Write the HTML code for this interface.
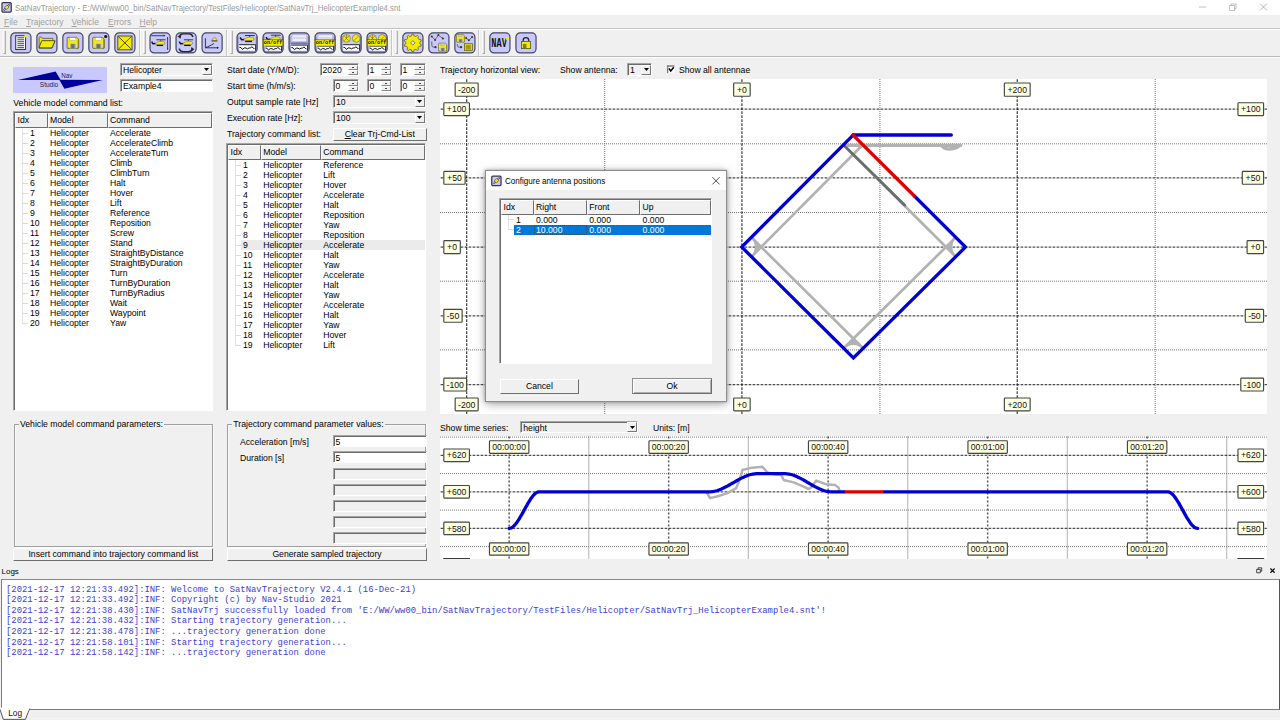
<!DOCTYPE html><html><head><meta charset="utf-8"><title>SatNavTrajectory</title><style>
html,body{margin:0;padding:0;}
body{width:1280px;height:720px;overflow:hidden;background:#f0f0f0;position:relative;
 font-family:"Liberation Sans",sans-serif;font-size:8.667px;line-height:10px;color:#000;}
.a{position:absolute;white-space:nowrap;}
.t{position:absolute;white-space:nowrap;line-height:10px;height:10px;}
.sunk{position:absolute;box-sizing:border-box;border-top:1px solid #a6a6a6;border-left:1px solid #a6a6a6;border-right:1px solid #fff;border-bottom:1px solid #fff;box-shadow:inset 1px 1px 0 #6c6c6c;}
.w{background:#fff;}
.btn{position:absolute;box-sizing:border-box;background:#f0f0f0;border-top:1px solid #fff;border-left:1px solid #fff;border-right:1.4px solid #6e6e6e;border-bottom:1.4px solid #6e6e6e;text-align:center;line-height:10px;}
.hdr{position:absolute;box-sizing:border-box;background:#f0f0f0;border-top:1px solid #fff;border-left:1px solid #fff;border-right:1.3px solid #6e6e6e;border-bottom:1.3px solid #6e6e6e;}
.grp{position:absolute;box-sizing:border-box;border:1px solid #a0a0a0;box-shadow:0.6px 0.6px 0 #fff, inset 0.6px 0.6px 0 #fff;}
.lab{position:absolute;box-sizing:border-box;background:#ffffe1;border:1px solid #333;text-align:center;font-size:8.667px;line-height:12px;}
.seg{font-family:"Liberation Sans",sans-serif;}
.mono{font-family:"Liberation Mono",monospace;font-size:8.89px;color:#4040d2;}
.tb{position:absolute;width:21.4px;height:21.4px;box-sizing:border-box;border:1.3px solid #34344a;border-radius:5px;background:#c8c8ff;overflow:hidden;}
.tb svg{position:absolute;left:-1.3px;top:-1.3px;}
</style></head><body>
<div class="a" style="left:0px;top:0px;width:1280px;height:15px;background:#fff;"></div>
<svg class="a" style="left:0;top:0" width="14" height="14" viewBox="0 0 14 14"><g transform="translate(1.3 2.05)"><rect x="0.65" y="0.65" width="9.3" height="9.4" rx="1.1" fill="#c8c8ff" stroke="#34344c" stroke-width="1.25"/><line x1="2.4" y1="8.3" x2="8.6" y2="2" stroke="#2a2a34" stroke-width="1.5"/><line x1="2.6" y1="8.1" x2="8.4" y2="2.2" stroke="#fff" stroke-width="0.7"/><ellipse cx="5.4" cy="5.2" rx="2.1" ry="1.7" transform="rotate(-45 5.4 5.2)" fill="#f4ec00" stroke="#2a2a20" stroke-width="0.5"/></g></svg>
<div class="a" style="left:15px;top:1.9px;font-size:9px;line-height:12px;color:#9a9a9a;transform:scaleX(0.871);transform-origin:0 0;">SatNavTrajectory - E:/WW/ww00_bin/SatNavTrajectory/TestFiles/Helicopter/SatNavTrj_HelicopterExample4.snt</div>
<svg class="a" style="left:1180px;top:0" width="100" height="15" viewBox="0 0 100 15"><line x1="19" y1="7" x2="26" y2="7" stroke="#c0c0c0" stroke-width="1"/><path d="M49.5 5.5h5v5h-5z M51 5.5v-1.5h5v5h-1.5" fill="none" stroke="#b0b0b0" stroke-width="0.8"/><path d="M80 3.5l7 7M87 3.5l-7 7" stroke="#999" stroke-width="0.7"/></svg>
<div class="a" style="left:4px;top:15.7px;font-size:8.5px;line-height:12px;color:#a0a0a0"><u>F</u>ile</div>
<div class="a" style="left:26px;top:15.7px;font-size:8.5px;line-height:12px;color:#a0a0a0"><u>T</u>rajectory</div>
<div class="a" style="left:71.5px;top:15.7px;font-size:8.5px;line-height:12px;color:#a0a0a0"><u>V</u>ehicle</div>
<div class="a" style="left:108px;top:15.7px;font-size:8.5px;line-height:12px;color:#a0a0a0"><u>E</u>rrors</div>
<div class="a" style="left:139.5px;top:15.7px;font-size:8.5px;line-height:12px;color:#a0a0a0"><u>H</u>elp</div>
<div class="a" style="left:0px;top:28px;width:1280px;height:1px;background:#c2c2c2;"></div>
<div class="a" style="left:0px;top:29px;width:1280px;height:1px;background:#fff;"></div>
<div class="a" style="left:0px;top:56px;width:1280px;height:1px;background:#bababa;"></div>
<div class="a" style="left:0px;top:57px;width:1280px;height:1px;background:#fff;"></div>
<div class="a" style="left:2.6px;top:31.4px;width:3.4px;height:22.2px;background:#dedede;border-left:1px solid #fbfbfb;border-right:1px solid #b0b0b0;border-bottom:0.9px solid #a8a8a8;box-sizing:border-box;"></div>
<div class="a" style="left:138.6px;top:30px;width:1px;height:26px;background:#c6c6c6;"></div>
<div class="a" style="left:139.6px;top:30px;width:1px;height:26px;background:#fbfbfb;"></div>
<div class="a" style="left:142.6px;top:31.4px;width:3.4px;height:22.2px;background:#dedede;border-left:1px solid #fbfbfb;border-right:1px solid #b0b0b0;border-bottom:0.9px solid #a8a8a8;box-sizing:border-box;"></div>
<div class="a" style="left:225.6px;top:30px;width:1px;height:26px;background:#c6c6c6;"></div>
<div class="a" style="left:226.6px;top:30px;width:1px;height:26px;background:#fbfbfb;"></div>
<div class="a" style="left:229.6px;top:31.4px;width:3.4px;height:22.2px;background:#dedede;border-left:1px solid #fbfbfb;border-right:1px solid #b0b0b0;border-bottom:0.9px solid #a8a8a8;box-sizing:border-box;"></div>
<div class="a" style="left:390.8px;top:30px;width:1px;height:26px;background:#c6c6c6;"></div>
<div class="a" style="left:391.8px;top:30px;width:1px;height:26px;background:#fbfbfb;"></div>
<div class="a" style="left:395px;top:31.4px;width:3.4px;height:22.2px;background:#dedede;border-left:1px solid #fbfbfb;border-right:1px solid #b0b0b0;border-bottom:0.9px solid #a8a8a8;box-sizing:border-box;"></div>
<div class="a" style="left:477.6px;top:30px;width:1px;height:26px;background:#c6c6c6;"></div>
<div class="a" style="left:478.6px;top:30px;width:1px;height:26px;background:#fbfbfb;"></div>
<div class="a" style="left:482px;top:31.4px;width:3.4px;height:22.2px;background:#dedede;border-left:1px solid #fbfbfb;border-right:1px solid #b0b0b0;border-bottom:0.9px solid #a8a8a8;box-sizing:border-box;"></div>
<svg class="a" style="left:0;top:0" width="560" height="58" viewBox="0 0 560 58"><g transform="translate(10.2 32.2)"><rect x="0.65" y="0.65" width="20.1" height="20.1" rx="4.2" fill="#c8c8ff"/><rect x="5.5" y="3.5" width="9.8" height="13.8" fill="#fff" stroke="#3a3a44" stroke-width="1.1"/><line x1="7.2" y1="5.60" x2="13.8" y2="5.60" stroke="#222" stroke-width="0.85"/><line x1="7.2" y1="7.57" x2="13.8" y2="7.57" stroke="#222" stroke-width="0.85"/><line x1="7.2" y1="9.54" x2="13.8" y2="9.54" stroke="#222" stroke-width="0.85"/><line x1="7.2" y1="11.51" x2="13.8" y2="11.51" stroke="#222" stroke-width="0.85"/><line x1="7.2" y1="13.48" x2="13.8" y2="13.48" stroke="#222" stroke-width="0.85"/><line x1="7.2" y1="15.45" x2="13.8" y2="15.45" stroke="#222" stroke-width="0.85"/><circle cx="15.5" cy="3.8" r="1.5" fill="#f4ec00"/><rect x="0.65" y="0.65" width="20.1" height="20.1" rx="4.2" fill="none" stroke="#464660" stroke-width="1.2"/></g><g transform="translate(36.2 32.2)"><rect x="0.65" y="0.65" width="20.1" height="20.1" rx="4.2" fill="#c8c8ff"/><path d="M2.9 15.6 V5.6 Q2.9 4.8 3.7 4.8 H5.2 L6.3 6.2 H16.6 V8.6 H5.6Z" fill="#f4ec00" stroke="#55551a" stroke-width="0.8" stroke-linejoin="round"/><path d="M2.8 15.7 L5.6 8.5 H18.8 L15.8 15.7 Z" fill="#f4ec00" stroke="#55551a" stroke-width="0.9" stroke-linejoin="round"/><path d="M2.6 16 H15.9 L18.9 8.7" fill="none" stroke="#3c3c10" stroke-width="0.6"/><rect x="0.65" y="0.65" width="20.1" height="20.1" rx="4.2" fill="none" stroke="#464660" stroke-width="1.2"/></g><g transform="translate(62.2 32.2)"><rect x="0.65" y="0.65" width="20.1" height="20.1" rx="4.2" fill="#c8c8ff"/><g transform="translate(4.9 5.1) scale(0.9666666666666667 0.9333333333333332)"><path d="M0 0.9 Q0 0 0.9 0 H9.8 L12 2.2 V11.1 Q12 12 11.1 12 H0.9 Q0 12 0 11.1Z" fill="#f4ec00" stroke="#55551a" stroke-width="0.8"/><path d="M11.4 2.4 V11.4 H1" fill="none" stroke="#8a8400" stroke-width="0.9"/><rect x="2.7" y="0.4" width="6.4" height="3" fill="#fff" stroke="#888" stroke-width="0.35"/><rect x="2.1" y="6.9" width="8" height="4.9" fill="#d8d8d8"/><rect x="3.2" y="6.9" width="5.6" height="4.9" fill="#9a9a9a"/><rect x="4.4" y="7.5" width="3" height="4.3" fill="#6e6e6e"/></g><rect x="0.65" y="0.65" width="20.1" height="20.1" rx="4.2" fill="none" stroke="#464660" stroke-width="1.2"/></g><g transform="translate(88.2 32.2)"><rect x="0.65" y="0.65" width="20.1" height="20.1" rx="4.2" fill="#c8c8ff"/><g transform="translate(4.5 5.1) scale(0.9666666666666667 0.9333333333333332)"><path d="M0 0.9 Q0 0 0.9 0 H9.8 L12 2.2 V11.1 Q12 12 11.1 12 H0.9 Q0 12 0 11.1Z" fill="#f4ec00" stroke="#55551a" stroke-width="0.8"/><path d="M11.4 2.4 V11.4 H1" fill="none" stroke="#8a8400" stroke-width="0.9"/><rect x="2.7" y="0.4" width="6.4" height="3" fill="#fff" stroke="#888" stroke-width="0.35"/><rect x="2.1" y="6.9" width="8" height="4.9" fill="#d8d8d8"/><rect x="3.2" y="6.9" width="5.6" height="4.9" fill="#9a9a9a"/><rect x="4.4" y="7.5" width="3" height="4.3" fill="#6e6e6e"/></g><circle cx="17.5" cy="4.3" r="1.6" fill="#111"/><rect x="0.65" y="0.65" width="20.1" height="20.1" rx="4.2" fill="none" stroke="#464660" stroke-width="1.2"/></g><g transform="translate(114.2 32.2)"><rect x="0.65" y="0.65" width="20.1" height="20.1" rx="4.2" fill="#c8c8ff"/><rect x="3.6" y="3.8" width="14.2" height="13.8" fill="#f4ec00" stroke="#55551a" stroke-width="1"/><path d="M4.2 4.4 L17.2 17 M17.2 4.4 L4.2 17" stroke="#26262e" stroke-width="0.8"/><rect x="0.65" y="0.65" width="20.1" height="20.1" rx="4.2" fill="none" stroke="#464660" stroke-width="1.2"/></g><g transform="translate(149.4 32.2)"><rect x="0.65" y="0.65" width="20.1" height="20.1" rx="4.2" fill="#c8c8ff"/><g transform="translate(10.6 10.9) scale(0.95)"><line x1="-3.9" y1="-3.5" x2="5.9" y2="-3.5" stroke="#26262e" stroke-width="0.9"/><line x1="0.8" y1="-3.5" x2="0.8" y2="-1.8" stroke="#26262e" stroke-width="0.8"/><path d="M-8.8 -1.6 L-7.3 0.7 L-4.6 0.5" fill="none" stroke="#111" stroke-width="1.5" stroke-linejoin="round"/><path d="M-5.2 0.7 C-3.4 -0.8 -1.2 -1.9 1 -1.9 L3.8 -1.8 Q5.3 -1.2 5.3 0 Q5.1 1.5 3.9 1.6 L-3.4 1.7 Z" fill="#f4ec00" stroke="#55551a" stroke-width="0.45"/><line x1="-3.6" y1="2.45" x2="3.2" y2="2.45" stroke="#111" stroke-width="1.3"/></g><path d="M1.8 3.5 H15.4 M18.2 5.2 V17.3" fill="none" stroke="#26262e" stroke-width="0.85"/><path d="M14.2 2.6 L16 3.5 L14.2 4.4Z M17.4 6.4 L18.2 4.8 L19 6.4Z M17.4 16.2 L18.2 17.8 L19 16.2Z" fill="#26262e"/><rect x="0.65" y="0.65" width="20.1" height="20.1" rx="4.2" fill="none" stroke="#464660" stroke-width="1.2"/></g><g transform="translate(175.4 32.2)"><rect x="0.65" y="0.65" width="20.1" height="20.1" rx="4.2" fill="#c8c8ff"/><g transform="translate(12.2 10.9) scale(0.95)"><line x1="-3.9" y1="-3.5" x2="5.9" y2="-3.5" stroke="#26262e" stroke-width="0.9"/><line x1="0.8" y1="-3.5" x2="0.8" y2="-1.8" stroke="#26262e" stroke-width="0.8"/><path d="M-8.8 -1.6 L-7.3 0.7 L-4.6 0.5" fill="none" stroke="#111" stroke-width="1.5" stroke-linejoin="round"/><path d="M-5.2 0.7 C-3.4 -0.8 -1.2 -1.9 1 -1.9 L3.8 -1.8 Q5.3 -1.2 5.3 0 Q5.1 1.5 3.9 1.6 L-3.4 1.7 Z" fill="#f4ec00" stroke="#55551a" stroke-width="0.45"/><line x1="-3.6" y1="2.45" x2="3.2" y2="2.45" stroke="#111" stroke-width="1.3"/></g><path d="M3.8 5 Q4.6 1.6 8.2 1.6 H13 Q16.8 1.6 17.4 4.8 M3.8 16.4 Q4.6 19.5 8.2 19.5 H13 Q16.6 19.5 17.4 16.6" fill="none" stroke="#26262e" stroke-width="1.5"/><path d="M2 4 L5.8 3 L5.2 6.6Z M19.2 17.4 L15.4 18.4 L16 14.8Z" fill="#26262e"/><rect x="0.65" y="0.65" width="20.1" height="20.1" rx="4.2" fill="none" stroke="#464660" stroke-width="1.2"/></g><g transform="translate(201.4 32.2)"><rect x="0.65" y="0.65" width="20.1" height="20.1" rx="4.2" fill="#c8c8ff"/><path d="M4 6 V15.6 H16.4 M4 15.6 Q9 13.6 12.5 11.3" fill="none" stroke="#26262e" stroke-width="0.9"/><path d="M15.6 14.4 L17.6 15.6 L15.6 16.8Z" fill="#26262e"/><path d="M10.4 8.4 Q11.4 5.4 13 5.2 Q14.8 5.4 15.8 8.4 Z" fill="#f4ec00" stroke="#55551a" stroke-width="0.4"/><line x1="10.2" y1="8.8" x2="16" y2="8.8" stroke="#26262e" stroke-width="0.8"/><rect x="0.65" y="0.65" width="20.1" height="20.1" rx="4.2" fill="none" stroke="#464660" stroke-width="1.2"/></g><g transform="translate(236.4 32.2)"><rect x="0.65" y="0.65" width="20.1" height="20.1" rx="4.2" fill="#c8c8ff"/><path d="M0.9 4 V16.5 Q0.9 20.5 5 20.5 H16.4 Q20.5 20.5 20.5 16.5 V4 L19.3 4 V16 Q19.3 18 17 18 H4.4 Q2.1 18 2.1 16 V4Z" fill="#8a8ab8"/><g transform="translate(12.4 6.8) scale(1.0)"><line x1="-3.9" y1="-3.5" x2="5.9" y2="-3.5" stroke="#26262e" stroke-width="0.9"/><line x1="0.8" y1="-3.5" x2="0.8" y2="-1.8" stroke="#26262e" stroke-width="0.8"/><path d="M-8.8 -1.6 L-7.3 0.7 L-4.6 0.5" fill="none" stroke="#111" stroke-width="1.5" stroke-linejoin="round"/><path d="M-5.2 0.7 C-3.4 -0.8 -1.2 -1.9 1 -1.9 L3.8 -1.8 Q5.3 -1.2 5.3 0 Q5.1 1.5 3.9 1.6 L-3.4 1.7 Z" fill="#f4ec00" stroke="#55551a" stroke-width="0.45"/><line x1="-3.6" y1="2.45" x2="3.2" y2="2.45" stroke="#111" stroke-width="1.3"/></g><rect x="2.8" y="12.5" width="16.4" height="6.100000000000001" fill="#fff"/><path d="M2.8 12.5 H19.2 V18.6" fill="none" stroke="#111" stroke-width="0.9"/><path d="M3 15.15 l1.6 0.2 l1.5 1.9 l1.7 -1.5 l1.8 0 l1.4 0.9 l1.7 -0.9 l1.6 0 l1.2 -1.3 l1.4 1.6 l1.2 0.4" fill="none" stroke="#111" stroke-width="1.0"/><rect x="0.65" y="0.65" width="20.1" height="20.1" rx="4.2" fill="none" stroke="#464660" stroke-width="1.2"/></g><g transform="translate(262.4 32.2)"><rect x="0.65" y="0.65" width="20.1" height="20.1" rx="4.2" fill="#c8c8ff"/><path d="M0.9 4 V16.5 Q0.9 20.5 5 20.5 H16.4 Q20.5 20.5 20.5 16.5 V4 L19.3 4 V16 Q19.3 18 17 18 H4.4 Q2.1 18 2.1 16 V4Z" fill="#8a8ab8"/><g transform="translate(12.4 6.5) scale(1.0)"><line x1="-3.9" y1="-3.5" x2="5.9" y2="-3.5" stroke="#26262e" stroke-width="0.9"/><line x1="0.8" y1="-3.5" x2="0.8" y2="-1.8" stroke="#26262e" stroke-width="0.8"/><path d="M-8.8 -1.6 L-7.3 0.7 L-4.6 0.5" fill="none" stroke="#111" stroke-width="1.5" stroke-linejoin="round"/><path d="M-5.2 0.7 C-3.4 -0.8 -1.2 -1.9 1 -1.9 L3.8 -1.8 Q5.3 -1.2 5.3 0 Q5.1 1.5 3.9 1.6 L-3.4 1.7 Z" fill="#f4ec00" stroke="#55551a" stroke-width="0.45"/><line x1="-3.6" y1="2.45" x2="3.2" y2="2.45" stroke="#111" stroke-width="1.3"/></g><rect x="2.8" y="13.9" width="16.4" height="4.700000000000001" fill="#fff"/><path d="M2.8 13.9 H19.2 V18.6" fill="none" stroke="#111" stroke-width="0.9"/><path d="M3 15.85 l1.6 0.2 l1.5 1.9 l1.7 -1.5 l1.8 0 l1.4 0.9 l1.7 -0.9 l1.6 0 l1.2 -1.3 l1.4 1.6 l1.2 0.4" fill="none" stroke="#111" stroke-width="1.0"/><rect x="0" y="7.5" width="21.4" height="6" fill="#f4ec00"/><line x1="0" y1="7.5" x2="21.4" y2="7.5" stroke="#26262e" stroke-width="0.5"/><text x="10.7" y="12.3" font-size="5.6" font-family="Liberation Mono, monospace" text-anchor="middle" fill="#111" font-weight="bold" textLength="18.5" lengthAdjust="spacingAndGlyphs">on/off</text><rect x="0.65" y="0.65" width="20.1" height="20.1" rx="4.2" fill="none" stroke="#464660" stroke-width="1.2"/></g><g transform="translate(288.4 32.2)"><rect x="0.65" y="0.65" width="20.1" height="20.1" rx="4.2" fill="#c8c8ff"/><path d="M0.9 4 V16.5 Q0.9 20.5 5 20.5 H16.4 Q20.5 20.5 20.5 16.5 V4 L19.3 4 V16 Q19.3 18 17 18 H4.4 Q2.1 18 2.1 16 V4Z" fill="#8a8ab8"/><rect x="3.6" y="2.6" width="14.8" height="7" fill="#ececff" stroke="#9a9ab8" stroke-width="0.5"/><text x="11" y="7" font-size="3.6" font-family="Liberation Mono, monospace" text-anchor="middle" fill="#b4b4dc" textLength="13" lengthAdjust="spacingAndGlyphs">%%%%%%</text><rect x="2.4" y="10.2" width="16.8" height="1.5" fill="#70708c"/><rect x="2.8" y="12.9" width="16.4" height="5.700000000000001" fill="#fff"/><path d="M2.8 12.9 H19.2 V18.6" fill="none" stroke="#111" stroke-width="0.9"/><path d="M3 15.35 l1.6 0.2 l1.5 1.9 l1.7 -1.5 l1.8 0 l1.4 0.9 l1.7 -0.9 l1.6 0 l1.2 -1.3 l1.4 1.6 l1.2 0.4" fill="none" stroke="#111" stroke-width="1.0"/><rect x="0.65" y="0.65" width="20.1" height="20.1" rx="4.2" fill="none" stroke="#464660" stroke-width="1.2"/></g><g transform="translate(314.4 32.2)"><rect x="0.65" y="0.65" width="20.1" height="20.1" rx="4.2" fill="#c8c8ff"/><path d="M0.9 4 V16.5 Q0.9 20.5 5 20.5 H16.4 Q20.5 20.5 20.5 16.5 V4 L19.3 4 V16 Q19.3 18 17 18 H4.4 Q2.1 18 2.1 16 V4Z" fill="#8a8ab8"/><rect x="3.6" y="2.6" width="14.8" height="7" fill="#ececff" stroke="#9a9ab8" stroke-width="0.5"/><text x="11" y="7" font-size="3.6" font-family="Liberation Mono, monospace" text-anchor="middle" fill="#b4b4dc" textLength="13" lengthAdjust="spacingAndGlyphs">%%%%%%</text><rect x="2.4" y="10.2" width="16.8" height="1.5" fill="#70708c"/><rect x="2.8" y="13.9" width="16.4" height="4.700000000000001" fill="#fff"/><path d="M2.8 13.9 H19.2 V18.6" fill="none" stroke="#111" stroke-width="0.9"/><path d="M3 15.85 l1.6 0.2 l1.5 1.9 l1.7 -1.5 l1.8 0 l1.4 0.9 l1.7 -0.9 l1.6 0 l1.2 -1.3 l1.4 1.6 l1.2 0.4" fill="none" stroke="#111" stroke-width="1.0"/><rect x="0" y="7.5" width="21.4" height="6" fill="#f4ec00"/><line x1="0" y1="7.5" x2="21.4" y2="7.5" stroke="#26262e" stroke-width="0.5"/><text x="10.7" y="12.3" font-size="5.6" font-family="Liberation Mono, monospace" text-anchor="middle" fill="#111" font-weight="bold" textLength="18.5" lengthAdjust="spacingAndGlyphs">on/off</text><rect x="0.65" y="0.65" width="20.1" height="20.1" rx="4.2" fill="none" stroke="#464660" stroke-width="1.2"/></g><g transform="translate(340.4 32.2)"><rect x="0.65" y="0.65" width="20.1" height="20.1" rx="4.2" fill="#c8c8ff"/><path d="M0.9 4 V16.5 Q0.9 20.5 5 20.5 H16.4 Q20.5 20.5 20.5 16.5 V4 L19.3 4 V16 Q19.3 18 17 18 H4.4 Q2.1 18 2.1 16 V4Z" fill="#8a8ab8"/><circle cx="6.1" cy="6.2" r="3.9" fill="#f4ec00" stroke="#55551a" stroke-width="0.5"/><circle cx="15.8" cy="6.2" r="3.9" fill="#f4ec00" stroke="#55551a" stroke-width="0.5"/><path d="M3.8 3.8 L8.4 8.6 M8.4 3.8 L3.8 8.6 M6.1 2.6 V6.2 M13.4 8.6 L18 4" stroke="#5c5c10" stroke-width="0.55"/><rect x="2.8" y="12.5" width="16.4" height="6.100000000000001" fill="#fff"/><path d="M2.8 12.5 H19.2 V18.6" fill="none" stroke="#111" stroke-width="0.9"/><path d="M3 15.15 l1.6 0.2 l1.5 1.9 l1.7 -1.5 l1.8 0 l1.4 0.9 l1.7 -0.9 l1.6 0 l1.2 -1.3 l1.4 1.6 l1.2 0.4" fill="none" stroke="#111" stroke-width="1.0"/><rect x="0.65" y="0.65" width="20.1" height="20.1" rx="4.2" fill="none" stroke="#464660" stroke-width="1.2"/></g><g transform="translate(366.4 32.2)"><rect x="0.65" y="0.65" width="20.1" height="20.1" rx="4.2" fill="#c8c8ff"/><path d="M0.9 4 V16.5 Q0.9 20.5 5 20.5 H16.4 Q20.5 20.5 20.5 16.5 V4 L19.3 4 V16 Q19.3 18 17 18 H4.4 Q2.1 18 2.1 16 V4Z" fill="#8a8ab8"/><circle cx="6.1" cy="6.2" r="3.9" fill="#f4ec00" stroke="#55551a" stroke-width="0.5"/><circle cx="15.8" cy="6.2" r="3.9" fill="#f4ec00" stroke="#55551a" stroke-width="0.5"/><path d="M3.8 3.8 L8.4 8.6 M8.4 3.8 L3.8 8.6 M6.1 2.6 V6.2 M13.4 8.6 L18 4" stroke="#5c5c10" stroke-width="0.55"/><rect x="2.8" y="13.9" width="16.4" height="4.700000000000001" fill="#fff"/><path d="M2.8 13.9 H19.2 V18.6" fill="none" stroke="#111" stroke-width="0.9"/><path d="M3 15.85 l1.6 0.2 l1.5 1.9 l1.7 -1.5 l1.8 0 l1.4 0.9 l1.7 -0.9 l1.6 0 l1.2 -1.3 l1.4 1.6 l1.2 0.4" fill="none" stroke="#111" stroke-width="1.0"/><rect x="0" y="7.5" width="21.4" height="6" fill="#f4ec00"/><line x1="0" y1="7.5" x2="21.4" y2="7.5" stroke="#26262e" stroke-width="0.5"/><text x="10.7" y="12.3" font-size="5.6" font-family="Liberation Mono, monospace" text-anchor="middle" fill="#111" font-weight="bold" textLength="18.5" lengthAdjust="spacingAndGlyphs">on/off</text><rect x="0.65" y="0.65" width="20.1" height="20.1" rx="4.2" fill="none" stroke="#464660" stroke-width="1.2"/></g><g transform="translate(402.2 32.2)"><rect x="0.65" y="0.65" width="20.1" height="20.1" rx="4.2" fill="#c8c8ff"/><polygon points="9.67,2.05 11.53,2.05 11.80,3.70 13.74,4.33 14.93,3.16 16.43,4.25 15.68,5.74 16.89,7.40 18.54,7.14 19.11,8.91 17.63,9.68 17.63,11.72 19.11,12.49 18.54,14.26 16.89,14.00 15.68,15.66 16.43,17.15 14.93,18.24 13.74,17.07 11.80,17.70 11.53,19.35 9.67,19.35 9.40,17.70 7.46,17.07 6.27,18.24 4.77,17.15 5.52,15.66 4.31,14.00 2.66,14.26 2.09,12.49 3.57,11.72 3.57,9.68 2.09,8.91 2.66,7.14 4.31,7.40 5.52,5.74 4.77,4.25 6.27,3.16 7.46,4.33 9.40,3.70" fill="#f4ec00" stroke="#55551a" stroke-width="0.7" stroke-linejoin="round"/><rect x="9" y="9.1" width="3.2" height="3.2" transform="rotate(45 10.6 10.7)" fill="#dcdcff" stroke="#55551a" stroke-width="0.6"/><rect x="0.65" y="0.65" width="20.1" height="20.1" rx="4.2" fill="none" stroke="#464660" stroke-width="1.2"/></g><g transform="translate(428.2 32.2)"><rect x="0.65" y="0.65" width="20.1" height="20.1" rx="4.2" fill="#c8c8ff"/><path d="M3.6 4.2 L6.9 7.8 L10.1 2.9 L14.7 6.2 M3.6 9.2 V13 Q3.6 15 5.8 15 H7" fill="none" stroke="#26262e" stroke-width="0.6"/><circle cx="3.6" cy="4.2" r="1.0" fill="#3a3410"/><circle cx="6.9" cy="7.8" r="1.0" fill="#3a3410"/><circle cx="10.1" cy="2.9" r="1.0" fill="#3a3410"/><circle cx="14.7" cy="6.2" r="1.0" fill="#3a3410"/><circle cx="7.3" cy="15" r="1.1" fill="#3a3410"/><g transform="translate(10.3 10.9) scale(0.7000000000000001 0.6749999999999999)"><path d="M0 0.9 Q0 0 0.9 0 H9.8 L12 2.2 V11.1 Q12 12 11.1 12 H0.9 Q0 12 0 11.1Z" fill="#f4ec00" stroke="#55551a" stroke-width="0.8"/><path d="M11.4 2.4 V11.4 H1" fill="none" stroke="#8a8400" stroke-width="0.9"/><rect x="2.7" y="0.4" width="6.4" height="3" fill="#c8c8c8" stroke="#888" stroke-width="0.35"/><rect x="2.1" y="6.9" width="8" height="4.9" fill="#d8d8d8"/><rect x="3.2" y="6.9" width="5.6" height="4.9" fill="#9a9a9a"/><rect x="4.4" y="7.5" width="3" height="4.3" fill="#6e6e6e"/></g><rect x="0.65" y="0.65" width="20.1" height="20.1" rx="4.2" fill="none" stroke="#464660" stroke-width="1.2"/></g><g transform="translate(454.2 32.2)"><rect x="0.65" y="0.65" width="20.1" height="20.1" rx="4.2" fill="#c8c8ff"/><g transform="translate(2.3 2.3) scale(0.6749999999999999 0.65)"><path d="M0 0.9 Q0 0 0.9 0 H9.8 L12 2.2 V11.1 Q12 12 11.1 12 H0.9 Q0 12 0 11.1Z" fill="#f4ec00" stroke="#55551a" stroke-width="0.8"/><path d="M11.4 2.4 V11.4 H1" fill="none" stroke="#8a8400" stroke-width="0.9"/><rect x="2.7" y="0.4" width="6.4" height="3" fill="#c8c8c8" stroke="#888" stroke-width="0.35"/><rect x="2.1" y="6.9" width="8" height="4.9" fill="#d8d8d8"/><rect x="3.2" y="6.9" width="5.6" height="4.9" fill="#9a9a9a"/><rect x="4.4" y="7.5" width="3" height="4.3" fill="#6e6e6e"/></g><path d="M12 5.8 L14.6 8.1 L17.9 4.9 M3.2 11.8 V13.4 Q3.2 15 5 15 H6.4" fill="none" stroke="#26262e" stroke-width="0.6"/><circle cx="12" cy="5.8" r="1.0" fill="#3a3410"/><circle cx="14.6" cy="8.1" r="1.0" fill="#3a3410"/><circle cx="17.9" cy="4.9" r="1.0" fill="#3a3410"/><circle cx="6.8" cy="15" r="1.1" fill="#3a3410"/><rect x="10.2" y="11.5" width="8" height="6.8" fill="#f4ec00" stroke="#55551a" stroke-width="0.7"/><rect x="11.4" y="12.6" width="5.6" height="4.8" fill="#a89a00"/><rect x="0.65" y="0.65" width="20.1" height="20.1" rx="4.2" fill="none" stroke="#464660" stroke-width="1.2"/></g><g transform="translate(489.2 32.2)"><rect x="0.65" y="0.65" width="20.1" height="20.1" rx="4.2" fill="#c8c8ff"/><text x="9.9" y="14.9" font-size="13" font-family="Liberation Mono, monospace" font-weight="bold" text-anchor="middle" fill="#111" textLength="15.6" lengthAdjust="spacingAndGlyphs">NAV</text><path d="M18.2 4.4 L20.2 6.5 L18.2 8.6 L16.2 6.5Z" fill="#f4ec00"/><rect x="0.65" y="0.65" width="20.1" height="20.1" rx="4.2" fill="none" stroke="#464660" stroke-width="1.2"/></g><g transform="translate(515.3 32.2)"><rect x="0.65" y="0.65" width="20.1" height="20.1" rx="4.2" fill="#c8c8ff"/><path d="M7.9 9.6 V8 Q7.9 5.4 10.6 5.4 Q13.4 5.4 13.4 8 V9.6" fill="none" stroke="#26262e" stroke-width="1.3"/><rect x="6.1" y="9.2" width="9" height="7.2" fill="#f4ec00" stroke="#55551a" stroke-width="0.8"/><rect x="7.6" y="11.7" width="3.5" height="4.2" fill="#8a7e00"/><rect x="0.65" y="0.65" width="20.1" height="20.1" rx="4.2" fill="none" stroke="#464660" stroke-width="1.2"/></g></svg>
<svg class="a" style="left:13px;top:66.5px" width="94" height="26" viewBox="0 0 94 26"><rect width="94" height="26" fill="#c8c8ff"/><polygon points="4.9,12.9 42.6,4.4 47.6,12.7 89.8,12.9 51.4,21.7 46.4,13 " fill="#00009b"/><text x="48.2" y="11" font-size="6.3" font-family="Liberation Sans, sans-serif" fill="#1c1c50">Nav</text><text x="26.8" y="20.1" font-size="6.5" font-family="Liberation Sans, sans-serif" fill="#1c1c50">Studio</text></svg>
<div class="sunk" style="left:120px;top:63.3px;width:92.5px;height:12.4px;background:#f0f0f0;"></div>
<div class="t" style="left:123px;top:64.5px">Helicopter</div>
<div class="btn" style="left:201.5px;top:64.6px;width:10px;height:10.0px;border-right-width:1px;border-bottom-width:1px;border-color:#fff #777 #777 #fff;"></div>
<svg class="a" style="left:203.9px;top:68.3px" width="5" height="3" viewBox="0 0 5 3"><polygon points="0,0 5,0 2.5,3" fill="#000"/></svg>
<div class="sunk" style="left:120px;top:79.3px;width:92.5px;height:12.6px;background:#fff;"></div>
<div class="t" style="left:123px;top:80.5px">Example4</div>
<div class="t" style="left:13.3px;top:97.60px;">Vehicle model command list:</div>
<div class="sunk" style="left:13px;top:111px;width:199.7px;height:300px;background:#fff;"></div>
<div class="hdr" style="left:15px;top:113px;width:32.5px;height:14.5px;"></div>
<div class="t" style="left:17.5px;top:115.2px">Idx</div>
<div class="hdr" style="left:47.5px;top:113px;width:60px;height:14.5px;"></div>
<div class="t" style="left:50.0px;top:115.2px">Model</div>
<div class="hdr" style="left:107.5px;top:113px;width:104.2px;height:14.5px;"></div>
<div class="t" style="left:110.0px;top:115.2px">Command</div>
<div class="a" style="left:21.5px;top:128.0px;width:1px;height:195.0px;background:#e4e4e4"></div>
<div class="a" style="left:21.5px;top:132.5px;width:6px;height:1px;background:#dadada"></div>
<div class="t" style="left:30px;top:128.0px;">1</div>
<div class="t" style="left:50.0px;top:128.0px;">Helicopter</div>
<div class="t" style="left:110.0px;top:128.0px;">Accelerate</div>
<div class="a" style="left:21.5px;top:142.5px;width:6px;height:1px;background:#dadada"></div>
<div class="t" style="left:30px;top:138.0px;">2</div>
<div class="t" style="left:50.0px;top:138.0px;">Helicopter</div>
<div class="t" style="left:110.0px;top:138.0px;">AccelerateClimb</div>
<div class="a" style="left:21.5px;top:152.5px;width:6px;height:1px;background:#dadada"></div>
<div class="t" style="left:30px;top:148.0px;">3</div>
<div class="t" style="left:50.0px;top:148.0px;">Helicopter</div>
<div class="t" style="left:110.0px;top:148.0px;">AccelerateTurn</div>
<div class="a" style="left:21.5px;top:162.5px;width:6px;height:1px;background:#dadada"></div>
<div class="t" style="left:30px;top:158.0px;">4</div>
<div class="t" style="left:50.0px;top:158.0px;">Helicopter</div>
<div class="t" style="left:110.0px;top:158.0px;">Climb</div>
<div class="a" style="left:21.5px;top:172.5px;width:6px;height:1px;background:#dadada"></div>
<div class="t" style="left:30px;top:168.0px;">5</div>
<div class="t" style="left:50.0px;top:168.0px;">Helicopter</div>
<div class="t" style="left:110.0px;top:168.0px;">ClimbTurn</div>
<div class="a" style="left:21.5px;top:182.5px;width:6px;height:1px;background:#dadada"></div>
<div class="t" style="left:30px;top:178.0px;">6</div>
<div class="t" style="left:50.0px;top:178.0px;">Helicopter</div>
<div class="t" style="left:110.0px;top:178.0px;">Halt</div>
<div class="a" style="left:21.5px;top:192.5px;width:6px;height:1px;background:#dadada"></div>
<div class="t" style="left:30px;top:188.0px;">7</div>
<div class="t" style="left:50.0px;top:188.0px;">Helicopter</div>
<div class="t" style="left:110.0px;top:188.0px;">Hover</div>
<div class="a" style="left:21.5px;top:202.5px;width:6px;height:1px;background:#dadada"></div>
<div class="t" style="left:30px;top:198.0px;">8</div>
<div class="t" style="left:50.0px;top:198.0px;">Helicopter</div>
<div class="t" style="left:110.0px;top:198.0px;">Lift</div>
<div class="a" style="left:21.5px;top:212.5px;width:6px;height:1px;background:#dadada"></div>
<div class="t" style="left:30px;top:208.0px;">9</div>
<div class="t" style="left:50.0px;top:208.0px;">Helicopter</div>
<div class="t" style="left:110.0px;top:208.0px;">Reference</div>
<div class="a" style="left:21.5px;top:222.5px;width:6px;height:1px;background:#dadada"></div>
<div class="t" style="left:30px;top:218.0px;">10</div>
<div class="t" style="left:50.0px;top:218.0px;">Helicopter</div>
<div class="t" style="left:110.0px;top:218.0px;">Reposition</div>
<div class="a" style="left:21.5px;top:232.5px;width:6px;height:1px;background:#dadada"></div>
<div class="t" style="left:30px;top:228.0px;">11</div>
<div class="t" style="left:50.0px;top:228.0px;">Helicopter</div>
<div class="t" style="left:110.0px;top:228.0px;">Screw</div>
<div class="a" style="left:21.5px;top:242.5px;width:6px;height:1px;background:#dadada"></div>
<div class="t" style="left:30px;top:238.0px;">12</div>
<div class="t" style="left:50.0px;top:238.0px;">Helicopter</div>
<div class="t" style="left:110.0px;top:238.0px;">Stand</div>
<div class="a" style="left:21.5px;top:252.5px;width:6px;height:1px;background:#dadada"></div>
<div class="t" style="left:30px;top:248.0px;">13</div>
<div class="t" style="left:50.0px;top:248.0px;">Helicopter</div>
<div class="t" style="left:110.0px;top:248.0px;">StraightByDistance</div>
<div class="a" style="left:21.5px;top:262.5px;width:6px;height:1px;background:#dadada"></div>
<div class="t" style="left:30px;top:258.0px;">14</div>
<div class="t" style="left:50.0px;top:258.0px;">Helicopter</div>
<div class="t" style="left:110.0px;top:258.0px;">StraightByDuration</div>
<div class="a" style="left:21.5px;top:272.5px;width:6px;height:1px;background:#dadada"></div>
<div class="t" style="left:30px;top:268.0px;">15</div>
<div class="t" style="left:50.0px;top:268.0px;">Helicopter</div>
<div class="t" style="left:110.0px;top:268.0px;">Turn</div>
<div class="a" style="left:21.5px;top:282.5px;width:6px;height:1px;background:#dadada"></div>
<div class="t" style="left:30px;top:278.0px;">16</div>
<div class="t" style="left:50.0px;top:278.0px;">Helicopter</div>
<div class="t" style="left:110.0px;top:278.0px;">TurnByDuration</div>
<div class="a" style="left:21.5px;top:292.5px;width:6px;height:1px;background:#dadada"></div>
<div class="t" style="left:30px;top:288.0px;">17</div>
<div class="t" style="left:50.0px;top:288.0px;">Helicopter</div>
<div class="t" style="left:110.0px;top:288.0px;">TurnByRadius</div>
<div class="a" style="left:21.5px;top:302.5px;width:6px;height:1px;background:#dadada"></div>
<div class="t" style="left:30px;top:298.0px;">18</div>
<div class="t" style="left:50.0px;top:298.0px;">Helicopter</div>
<div class="t" style="left:110.0px;top:298.0px;">Wait</div>
<div class="a" style="left:21.5px;top:312.5px;width:6px;height:1px;background:#dadada"></div>
<div class="t" style="left:30px;top:308.0px;">19</div>
<div class="t" style="left:50.0px;top:308.0px;">Helicopter</div>
<div class="t" style="left:110.0px;top:308.0px;">Waypoint</div>
<div class="a" style="left:21.5px;top:322.5px;width:6px;height:1px;background:#dadada"></div>
<div class="t" style="left:30px;top:318.0px;">20</div>
<div class="t" style="left:50.0px;top:318.0px;">Helicopter</div>
<div class="t" style="left:110.0px;top:318.0px;">Yaw</div>
<div class="grp" style="left:13.5px;top:424px;width:199.5px;height:122.7px;"></div>
<div class="t" style="left:18.5px;top:418.6px;background:#f0f0f0;padding:0 1.5px">Vehicle model command parameters:</div>
<div class="btn" style="left:13.4px;top:547.5px;width:199.9px;height:13.4px;"><div style="margin-top:0.8px">Insert command into trajectory command list</div></div>
<div class="t" style="left:227px;top:65.10px;">Start date (Y/M/D):</div>
<div class="sunk" style="left:320px;top:63.3px;width:39.3px;height:12.4px;background:#fff;"></div>
<div class="t" style="left:322.5px;top:64.5px">2020</div>
<div class="btn" style="left:347.8px;top:64.89999999999999px;width:10.5px;height:4.9px;border-right-width:1px;border-bottom-width:1px;border-color:#fff #8a8a8a #8a8a8a #fff;"></div>
<div class="a" style="left:352.0px;top:67.14999999999999px;width:2px;height:1px;background:#444"></div>
<div class="btn" style="left:347.8px;top:69.8px;width:10.5px;height:4.9px;border-right-width:1px;border-bottom-width:1px;border-color:#fff #8a8a8a #8a8a8a #fff;"></div>
<div class="a" style="left:352.0px;top:72.05px;width:2px;height:1px;background:#444"></div>
<div class="sunk" style="left:367px;top:63.3px;width:25.3px;height:12.4px;background:#fff;"></div>
<div class="t" style="left:369.5px;top:64.5px">1</div>
<div class="btn" style="left:380.8px;top:64.89999999999999px;width:10.5px;height:4.9px;border-right-width:1px;border-bottom-width:1px;border-color:#fff #8a8a8a #8a8a8a #fff;"></div>
<div class="a" style="left:385.0px;top:67.14999999999999px;width:2px;height:1px;background:#444"></div>
<div class="btn" style="left:380.8px;top:69.8px;width:10.5px;height:4.9px;border-right-width:1px;border-bottom-width:1px;border-color:#fff #8a8a8a #8a8a8a #fff;"></div>
<div class="a" style="left:385.0px;top:72.05px;width:2px;height:1px;background:#444"></div>
<div class="sunk" style="left:400px;top:63.3px;width:25.8px;height:12.4px;background:#fff;"></div>
<div class="t" style="left:402.5px;top:64.5px">1</div>
<div class="btn" style="left:414.3px;top:64.89999999999999px;width:10.5px;height:4.9px;border-right-width:1px;border-bottom-width:1px;border-color:#fff #8a8a8a #8a8a8a #fff;"></div>
<div class="a" style="left:418.5px;top:67.14999999999999px;width:2px;height:1px;background:#444"></div>
<div class="btn" style="left:414.3px;top:69.8px;width:10.5px;height:4.9px;border-right-width:1px;border-bottom-width:1px;border-color:#fff #8a8a8a #8a8a8a #fff;"></div>
<div class="a" style="left:418.5px;top:72.05px;width:2px;height:1px;background:#444"></div>
<div class="t" style="left:227px;top:81.10px;">Start time (h/m/s):</div>
<div class="sunk" style="left:333px;top:79.3px;width:26.3px;height:12.4px;background:#fff;"></div>
<div class="t" style="left:335.5px;top:80.5px">0</div>
<div class="btn" style="left:347.8px;top:80.89999999999999px;width:10.5px;height:4.9px;border-right-width:1px;border-bottom-width:1px;border-color:#fff #8a8a8a #8a8a8a #fff;"></div>
<div class="a" style="left:352.0px;top:83.14999999999999px;width:2px;height:1px;background:#444"></div>
<div class="btn" style="left:347.8px;top:85.8px;width:10.5px;height:4.9px;border-right-width:1px;border-bottom-width:1px;border-color:#fff #8a8a8a #8a8a8a #fff;"></div>
<div class="a" style="left:352.0px;top:88.05px;width:2px;height:1px;background:#444"></div>
<div class="sunk" style="left:367px;top:79.3px;width:25.3px;height:12.4px;background:#fff;"></div>
<div class="t" style="left:369.5px;top:80.5px">0</div>
<div class="btn" style="left:380.8px;top:80.89999999999999px;width:10.5px;height:4.9px;border-right-width:1px;border-bottom-width:1px;border-color:#fff #8a8a8a #8a8a8a #fff;"></div>
<div class="a" style="left:385.0px;top:83.14999999999999px;width:2px;height:1px;background:#444"></div>
<div class="btn" style="left:380.8px;top:85.8px;width:10.5px;height:4.9px;border-right-width:1px;border-bottom-width:1px;border-color:#fff #8a8a8a #8a8a8a #fff;"></div>
<div class="a" style="left:385.0px;top:88.05px;width:2px;height:1px;background:#444"></div>
<div class="sunk" style="left:400px;top:79.3px;width:25.8px;height:12.4px;background:#fff;"></div>
<div class="t" style="left:402.5px;top:80.5px">0</div>
<div class="btn" style="left:414.3px;top:80.89999999999999px;width:10.5px;height:4.9px;border-right-width:1px;border-bottom-width:1px;border-color:#fff #8a8a8a #8a8a8a #fff;"></div>
<div class="a" style="left:418.5px;top:83.14999999999999px;width:2px;height:1px;background:#444"></div>
<div class="btn" style="left:414.3px;top:85.8px;width:10.5px;height:4.9px;border-right-width:1px;border-bottom-width:1px;border-color:#fff #8a8a8a #8a8a8a #fff;"></div>
<div class="a" style="left:418.5px;top:88.05px;width:2px;height:1px;background:#444"></div>
<div class="t" style="left:227px;top:97.10px;">Output sample rate [Hz]</div>
<div class="sunk" style="left:333px;top:95.4px;width:92.8px;height:12.4px;background:#f0f0f0;"></div>
<div class="t" style="left:336px;top:96.60000000000001px">10</div>
<div class="btn" style="left:414.8px;top:96.7px;width:10px;height:10.0px;border-right-width:1px;border-bottom-width:1px;border-color:#fff #777 #777 #fff;"></div>
<svg class="a" style="left:417.2px;top:100.4px" width="5" height="3" viewBox="0 0 5 3"><polygon points="0,0 5,0 2.5,3" fill="#000"/></svg>
<div class="t" style="left:227px;top:113.10px;">Execution rate [Hz]:</div>
<div class="sunk" style="left:333px;top:111.4px;width:92.8px;height:12.4px;background:#f0f0f0;"></div>
<div class="t" style="left:336px;top:112.60000000000001px">100</div>
<div class="btn" style="left:414.8px;top:112.7px;width:10px;height:10.0px;border-right-width:1px;border-bottom-width:1px;border-color:#fff #777 #777 #fff;"></div>
<svg class="a" style="left:417.2px;top:116.4px" width="5" height="3" viewBox="0 0 5 3"><polygon points="0,0 5,0 2.5,3" fill="#000"/></svg>
<div class="t" style="left:227px;top:129.40px;">Trajectory command list:</div>
<div class="btn" style="left:333px;top:128px;width:93.5px;height:12.8px;"><div style="margin-top:0.4px"><u>C</u>lear Trj-Cmd-List</div></div>
<div class="sunk" style="left:226px;top:143px;width:200px;height:268px;background:#fff;"></div>
<div class="hdr" style="left:228px;top:145px;width:32.8px;height:14.5px;"></div>
<div class="t" style="left:230.5px;top:147.2px">Idx</div>
<div class="hdr" style="left:260.8px;top:145px;width:60px;height:14.5px;"></div>
<div class="t" style="left:263.3px;top:147.2px">Model</div>
<div class="hdr" style="left:320.8px;top:145px;width:104.2px;height:14.5px;"></div>
<div class="t" style="left:323.3px;top:147.2px">Command</div>
<div class="a" style="left:234.5px;top:160.0px;width:1px;height:185.0px;background:#e4e4e4"></div>
<div class="a" style="left:234.5px;top:164.5px;width:6px;height:1px;background:#dadada"></div>
<div class="t" style="left:243px;top:160.0px;">1</div>
<div class="t" style="left:263.3px;top:160.0px;">Helicopter</div>
<div class="t" style="left:323.3px;top:160.0px;">Reference</div>
<div class="a" style="left:234.5px;top:174.5px;width:6px;height:1px;background:#dadada"></div>
<div class="t" style="left:243px;top:170.0px;">2</div>
<div class="t" style="left:263.3px;top:170.0px;">Helicopter</div>
<div class="t" style="left:323.3px;top:170.0px;">Lift</div>
<div class="a" style="left:234.5px;top:184.5px;width:6px;height:1px;background:#dadada"></div>
<div class="t" style="left:243px;top:180.0px;">3</div>
<div class="t" style="left:263.3px;top:180.0px;">Helicopter</div>
<div class="t" style="left:323.3px;top:180.0px;">Hover</div>
<div class="a" style="left:234.5px;top:194.5px;width:6px;height:1px;background:#dadada"></div>
<div class="t" style="left:243px;top:190.0px;">4</div>
<div class="t" style="left:263.3px;top:190.0px;">Helicopter</div>
<div class="t" style="left:323.3px;top:190.0px;">Accelerate</div>
<div class="a" style="left:234.5px;top:204.5px;width:6px;height:1px;background:#dadada"></div>
<div class="t" style="left:243px;top:200.0px;">5</div>
<div class="t" style="left:263.3px;top:200.0px;">Helicopter</div>
<div class="t" style="left:323.3px;top:200.0px;">Halt</div>
<div class="a" style="left:234.5px;top:214.5px;width:6px;height:1px;background:#dadada"></div>
<div class="t" style="left:243px;top:210.0px;">6</div>
<div class="t" style="left:263.3px;top:210.0px;">Helicopter</div>
<div class="t" style="left:323.3px;top:210.0px;">Reposition</div>
<div class="a" style="left:234.5px;top:224.5px;width:6px;height:1px;background:#dadada"></div>
<div class="t" style="left:243px;top:220.0px;">7</div>
<div class="t" style="left:263.3px;top:220.0px;">Helicopter</div>
<div class="t" style="left:323.3px;top:220.0px;">Yaw</div>
<div class="a" style="left:234.5px;top:234.5px;width:6px;height:1px;background:#dadada"></div>
<div class="t" style="left:243px;top:230.0px;">8</div>
<div class="t" style="left:263.3px;top:230.0px;">Helicopter</div>
<div class="t" style="left:323.3px;top:230.0px;">Reposition</div>
<div class="a" style="left:234.5px;top:244.5px;width:6px;height:1px;background:#dadada"></div>
<div class="a" style="left:241px;top:240.0px;width:184px;height:10px;background:#ebebeb"></div>
<div class="t" style="left:243px;top:240.0px;">9</div>
<div class="t" style="left:263.3px;top:240.0px;">Helicopter</div>
<div class="t" style="left:323.3px;top:240.0px;">Accelerate</div>
<div class="a" style="left:234.5px;top:254.5px;width:6px;height:1px;background:#dadada"></div>
<div class="t" style="left:243px;top:250.0px;">10</div>
<div class="t" style="left:263.3px;top:250.0px;">Helicopter</div>
<div class="t" style="left:323.3px;top:250.0px;">Halt</div>
<div class="a" style="left:234.5px;top:264.5px;width:6px;height:1px;background:#dadada"></div>
<div class="t" style="left:243px;top:260.0px;">11</div>
<div class="t" style="left:263.3px;top:260.0px;">Helicopter</div>
<div class="t" style="left:323.3px;top:260.0px;">Yaw</div>
<div class="a" style="left:234.5px;top:274.5px;width:6px;height:1px;background:#dadada"></div>
<div class="t" style="left:243px;top:270.0px;">12</div>
<div class="t" style="left:263.3px;top:270.0px;">Helicopter</div>
<div class="t" style="left:323.3px;top:270.0px;">Accelerate</div>
<div class="a" style="left:234.5px;top:284.5px;width:6px;height:1px;background:#dadada"></div>
<div class="t" style="left:243px;top:280.0px;">13</div>
<div class="t" style="left:263.3px;top:280.0px;">Helicopter</div>
<div class="t" style="left:323.3px;top:280.0px;">Halt</div>
<div class="a" style="left:234.5px;top:294.5px;width:6px;height:1px;background:#dadada"></div>
<div class="t" style="left:243px;top:290.0px;">14</div>
<div class="t" style="left:263.3px;top:290.0px;">Helicopter</div>
<div class="t" style="left:323.3px;top:290.0px;">Yaw</div>
<div class="a" style="left:234.5px;top:304.5px;width:6px;height:1px;background:#dadada"></div>
<div class="t" style="left:243px;top:300.0px;">15</div>
<div class="t" style="left:263.3px;top:300.0px;">Helicopter</div>
<div class="t" style="left:323.3px;top:300.0px;">Accelerate</div>
<div class="a" style="left:234.5px;top:314.5px;width:6px;height:1px;background:#dadada"></div>
<div class="t" style="left:243px;top:310.0px;">16</div>
<div class="t" style="left:263.3px;top:310.0px;">Helicopter</div>
<div class="t" style="left:323.3px;top:310.0px;">Halt</div>
<div class="a" style="left:234.5px;top:324.5px;width:6px;height:1px;background:#dadada"></div>
<div class="t" style="left:243px;top:320.0px;">17</div>
<div class="t" style="left:263.3px;top:320.0px;">Helicopter</div>
<div class="t" style="left:323.3px;top:320.0px;">Yaw</div>
<div class="a" style="left:234.5px;top:334.5px;width:6px;height:1px;background:#dadada"></div>
<div class="t" style="left:243px;top:330.0px;">18</div>
<div class="t" style="left:263.3px;top:330.0px;">Helicopter</div>
<div class="t" style="left:323.3px;top:330.0px;">Hover</div>
<div class="a" style="left:234.5px;top:344.5px;width:6px;height:1px;background:#dadada"></div>
<div class="t" style="left:243px;top:340.0px;">19</div>
<div class="t" style="left:263.3px;top:340.0px;">Helicopter</div>
<div class="t" style="left:323.3px;top:340.0px;">Lift</div>
<div class="grp" style="left:226.8px;top:424px;width:199.2px;height:122.7px;"></div>
<div class="t" style="left:231.8px;top:418.6px;background:#f0f0f0;padding:0 1.5px">Trajectory command parameter values:</div>
<div class="t" style="left:240px;top:436.60px;">Acceleration [m/s]</div>
<div class="t" style="left:240px;top:452.60px;">Duration [s]</div>
<div class="sunk" style="left:333px;top:435.3px;width:94px;height:12px;background:#fff;"></div>
<div class="t" style="left:335.5px;top:436.5px">5</div>
<div class="sunk" style="left:333px;top:451.4px;width:94px;height:12px;background:#fff;"></div>
<div class="t" style="left:335.5px;top:452.59999999999997px">5</div>
<div class="sunk" style="left:333px;top:467.6px;width:94px;height:12px;background:#f0f0f0;"></div>
<div class="sunk" style="left:333px;top:483.7px;width:94px;height:12px;background:#f0f0f0;"></div>
<div class="sunk" style="left:333px;top:499.8px;width:94px;height:12px;background:#f0f0f0;"></div>
<div class="sunk" style="left:333px;top:516.0px;width:94px;height:12px;background:#f0f0f0;"></div>
<div class="sunk" style="left:333px;top:532.1px;width:94px;height:12px;background:#f0f0f0;"></div>
<div class="btn" style="left:226.7px;top:547.5px;width:200.6px;height:13.4px;"><div style="margin-top:0.8px">Generate sampled trajectory</div></div>
<div class="t" style="left:440px;top:65.10px;">Trajectory horizontal view:</div>
<div class="t" style="left:560px;top:65.10px;">Show antenna:</div>
<div class="sunk" style="left:627px;top:63.3px;width:25.3px;height:12.4px;background:#f0f0f0;"></div>
<div class="t" style="left:630px;top:64.5px">1</div>
<div class="btn" style="left:641.3px;top:64.6px;width:10px;height:10.0px;border-right-width:1px;border-bottom-width:1px;border-color:#fff #777 #777 #fff;"></div>
<svg class="a" style="left:643.6999999999999px;top:68.3px" width="5" height="3" viewBox="0 0 5 3"><polygon points="0,0 5,0 2.5,3" fill="#000"/></svg>
<svg class="a" style="left:666px;top:64px" width="10" height="10" viewBox="666 64 10 10"><rect x="667" y="65.4" width="7.5" height="7.5" fill="#fafafa"/><path d="M667.6 72.9 V66 H674.4" fill="none" stroke="#7a7a7a" stroke-width="1.3"/><path d="M669 68.5 L670.7 70.9 L673.8 67.2" fill="none" stroke="#000" stroke-width="1.5"/></svg>
<div class="t" style="left:679px;top:65.10px;">Show all antennae</div>
<svg class="a" style="left:439.8px;top:78.8px" width="827.0" height="335.2" viewBox="439.8 78.8 827.0 335.2"><rect x="439.8" y="78.8" width="827.0" height="335.2" fill="#fff"/><line x1="604.5" y1="78.8" x2="604.5" y2="414" stroke="#777" stroke-width="1" stroke-dasharray="1 1"/><line x1="879.7" y1="78.8" x2="879.7" y2="414" stroke="#777" stroke-width="1" stroke-dasharray="1 1"/><line x1="1155" y1="78.8" x2="1155" y2="414" stroke="#777" stroke-width="1" stroke-dasharray="1 1"/><line x1="439.8" y1="143.6" x2="1266.8" y2="143.6" stroke="#777" stroke-width="1" stroke-dasharray="1 1"/><line x1="439.8" y1="212.35" x2="1266.8" y2="212.35" stroke="#777" stroke-width="1" stroke-dasharray="1 1"/><line x1="439.8" y1="281.0" x2="1266.8" y2="281.0" stroke="#777" stroke-width="1" stroke-dasharray="1 1"/><line x1="439.8" y1="349.7" x2="1266.8" y2="349.7" stroke="#777" stroke-width="1" stroke-dasharray="1 1"/><line x1="466.45" y1="79.1" x2="466.45" y2="414" stroke="#000" stroke-opacity="0.7" stroke-width="1.3" stroke-dasharray="2.67 1.33"/><line x1="741.7" y1="79.1" x2="741.7" y2="414" stroke="#000" stroke-opacity="0.7" stroke-width="1.3" stroke-dasharray="2.67 1.33"/><line x1="1017.05" y1="79.1" x2="1017.05" y2="414" stroke="#000" stroke-opacity="0.7" stroke-width="1.3" stroke-dasharray="2.67 1.33"/><line x1="440.40000000000003" y1="109.0" x2="1266.8" y2="109.0" stroke="#000" stroke-opacity="0.7" stroke-width="1.3" stroke-dasharray="2.67 1.33"/><line x1="440.40000000000003" y1="177.6" x2="1266.8" y2="177.6" stroke="#000" stroke-opacity="0.7" stroke-width="1.3" stroke-dasharray="2.67 1.33"/><line x1="440.40000000000003" y1="246.95" x2="1266.8" y2="246.95" stroke="#000" stroke-opacity="0.7" stroke-width="1.3" stroke-dasharray="2.67 1.33"/><line x1="440.40000000000003" y1="315.6" x2="1266.8" y2="315.6" stroke="#000" stroke-opacity="0.7" stroke-width="1.3" stroke-dasharray="2.67 1.33"/><line x1="440.40000000000003" y1="384.35" x2="1266.8" y2="384.35" stroke="#000" stroke-opacity="0.7" stroke-width="1.3" stroke-dasharray="2.67 1.33"/><g fill="none" stroke="#b2b2b2" stroke-width="2.7" stroke-linecap="round"><path d="M843.18 144.57 L955.5799999999999 256.57"/><path d="M955.5799999999999 237.13 L843.48 348.08"/><path d="M862.9200000000001 348.08 L751.22 237.13"/><path d="M751.22 256.57 L862.62 144.57"/></g><path d="M844.8 145.25 H960.5" stroke="#b2b2b2" stroke-width="3.2" fill="none" stroke-linecap="round"/><path d="M939.8 146 Q943 150.6 949.5 150.6 Q957 150.4 961.6 145.6 Z" fill="#b2b2b2"/><circle cx="948.6" cy="147.3" r="0.6" fill="#e8e8e8"/><path d="M760.94 246.85 L751.22 237.13 A13.75 13.75 0 0 1 751.22 256.57 Z M945.8599999999999 246.85 L955.5799999999999 237.13 A13.75 13.75 0 0 0 955.5799999999999 256.57 Z M853.2 338.36 L843.48 348.08 A13.75 13.75 0 0 1 862.9200000000001 348.08 Z " fill="#b2b2b2" stroke="#b2b2b2" stroke-width="1.4" stroke-linejoin="round"/><path d="M844.38 145.76999999999998 L904.6 205" stroke="#6c6c6c" stroke-width="2.7" fill="none" stroke-linecap="round"/><path d="M951 134.8 H852.9" fill="none" stroke="#0000d4" stroke-width="3.5" stroke-linecap="round"/><path d="M852.9 134.85 L741.5 246.85 L853.2 357.8 L965.3 246.85 L914.2 195.8" fill="none" stroke="#0000d4" stroke-width="3.3" stroke-linejoin="miter" stroke-linecap="round"/><path d="M852.9 134.85 L914.2 195.8" fill="none" stroke="#e00000" stroke-width="3.3" stroke-linecap="round"/><rect x="454.95" y="82.85" width="23.00" height="13.20" rx="0.8" fill="#ffffe1" stroke="#444" stroke-width="1.15"/><text x="466.45" y="92.60" font-size="8.667" font-family="Liberation Sans, sans-serif" text-anchor="middle" fill="#111">-200</text><rect x="454.95" y="397.80" width="23.00" height="12.90" rx="0.8" fill="#ffffe1" stroke="#444" stroke-width="1.15"/><text x="466.45" y="407.40" font-size="8.667" font-family="Liberation Sans, sans-serif" text-anchor="middle" fill="#111">-200</text><rect x="733.45" y="82.85" width="16.50" height="13.20" rx="0.8" fill="#ffffe1" stroke="#444" stroke-width="1.15"/><text x="741.70" y="92.60" font-size="8.667" font-family="Liberation Sans, sans-serif" text-anchor="middle" fill="#111">+0</text><rect x="733.45" y="397.80" width="16.50" height="12.90" rx="0.8" fill="#ffffe1" stroke="#444" stroke-width="1.15"/><text x="741.70" y="407.40" font-size="8.667" font-family="Liberation Sans, sans-serif" text-anchor="middle" fill="#111">+0</text><rect x="1004.15" y="82.85" width="25.80" height="13.20" rx="0.8" fill="#ffffe1" stroke="#444" stroke-width="1.15"/><text x="1017.05" y="92.60" font-size="8.667" font-family="Liberation Sans, sans-serif" text-anchor="middle" fill="#111">+200</text><rect x="1004.15" y="397.80" width="25.80" height="12.90" rx="0.8" fill="#ffffe1" stroke="#444" stroke-width="1.15"/><text x="1017.05" y="407.40" font-size="8.667" font-family="Liberation Sans, sans-serif" text-anchor="middle" fill="#111">+200</text><rect x="443.60" y="102.55" width="25.60" height="12.90" rx="0.8" fill="#ffffe1" stroke="#444" stroke-width="1.15"/><text x="456.40" y="112.15" font-size="8.667" font-family="Liberation Sans, sans-serif" text-anchor="middle" fill="#111">+100</text><rect x="1237.80" y="102.55" width="25.60" height="12.90" rx="0.8" fill="#ffffe1" stroke="#444" stroke-width="1.15"/><text x="1250.60" y="112.15" font-size="8.667" font-family="Liberation Sans, sans-serif" text-anchor="middle" fill="#111">+100</text><rect x="443.60" y="171.15" width="21.30" height="12.90" rx="0.8" fill="#ffffe1" stroke="#444" stroke-width="1.15"/><text x="454.25" y="180.75" font-size="8.667" font-family="Liberation Sans, sans-serif" text-anchor="middle" fill="#111">+50</text><rect x="1242.10" y="171.15" width="21.30" height="12.90" rx="0.8" fill="#ffffe1" stroke="#444" stroke-width="1.15"/><text x="1252.75" y="180.75" font-size="8.667" font-family="Liberation Sans, sans-serif" text-anchor="middle" fill="#111">+50</text><rect x="443.60" y="240.50" width="16.50" height="12.90" rx="0.8" fill="#ffffe1" stroke="#444" stroke-width="1.15"/><text x="451.85" y="250.10" font-size="8.667" font-family="Liberation Sans, sans-serif" text-anchor="middle" fill="#111">+0</text><rect x="1246.90" y="240.50" width="16.50" height="12.90" rx="0.8" fill="#ffffe1" stroke="#444" stroke-width="1.15"/><text x="1255.15" y="250.10" font-size="8.667" font-family="Liberation Sans, sans-serif" text-anchor="middle" fill="#111">+0</text><rect x="443.60" y="309.15" width="18.30" height="12.90" rx="0.8" fill="#ffffe1" stroke="#444" stroke-width="1.15"/><text x="452.75" y="318.75" font-size="8.667" font-family="Liberation Sans, sans-serif" text-anchor="middle" fill="#111">-50</text><rect x="1245.10" y="309.15" width="18.30" height="12.90" rx="0.8" fill="#ffffe1" stroke="#444" stroke-width="1.15"/><text x="1254.25" y="318.75" font-size="8.667" font-family="Liberation Sans, sans-serif" text-anchor="middle" fill="#111">-50</text><rect x="443.60" y="377.90" width="22.80" height="12.90" rx="0.8" fill="#ffffe1" stroke="#444" stroke-width="1.15"/><text x="455.00" y="387.50" font-size="8.667" font-family="Liberation Sans, sans-serif" text-anchor="middle" fill="#111">-100</text><rect x="1240.60" y="377.90" width="22.80" height="12.90" rx="0.8" fill="#ffffe1" stroke="#444" stroke-width="1.15"/><text x="1252.00" y="387.50" font-size="8.667" font-family="Liberation Sans, sans-serif" text-anchor="middle" fill="#111">-100</text></svg>
<div class="t" style="left:440px;top:422.70px;">Show time series:</div>
<div class="sunk" style="left:520.3px;top:421px;width:118px;height:12.2px;background:#f0f0f0;"></div>
<div class="t" style="left:523.3px;top:422.9px">height</div>
<div class="btn" style="left:627.3px;top:422.3px;width:10px;height:9.799999999999999px;border-right-width:1px;border-bottom-width:1px;border-color:#fff #777 #777 #fff;"></div>
<svg class="a" style="left:629.6999999999999px;top:425.90000000000003px" width="5" height="3" viewBox="0 0 5 3"><polygon points="0,0 5,0 2.5,3" fill="#000"/></svg>
<div class="t" style="left:653px;top:422.70px;">Units: [m]</div>
<svg class="a" style="left:439.8px;top:435.8px" width="826.8" height="123.09999999999997" viewBox="439.8 435.8 826.8 123.09999999999997"><rect x="439.8" y="435.8" width="826.8" height="123.09999999999997" fill="#fff"/><line x1="588.6" y1="435.8" x2="588.6" y2="558.9" stroke="#a8a8a8" stroke-width="0.9"/><line x1="748.1" y1="435.8" x2="748.1" y2="558.9" stroke="#a8a8a8" stroke-width="0.9"/><line x1="907.6" y1="435.8" x2="907.6" y2="558.9" stroke="#a8a8a8" stroke-width="0.9"/><line x1="1067.1" y1="435.8" x2="1067.1" y2="558.9" stroke="#a8a8a8" stroke-width="0.9"/><line x1="1226.6" y1="435.8" x2="1226.6" y2="558.9" stroke="#a8a8a8" stroke-width="0.9"/><line x1="439.8" y1="436.9" x2="1266.6" y2="436.9" stroke="#777" stroke-width="1" stroke-dasharray="1 1"/><line x1="439.8" y1="473.4" x2="1266.6" y2="473.4" stroke="#777" stroke-width="1" stroke-dasharray="1 1"/><line x1="439.8" y1="509.9" x2="1266.6" y2="509.9" stroke="#777" stroke-width="1" stroke-dasharray="1 1"/><line x1="439.8" y1="546.4" x2="1266.6" y2="546.4" stroke="#777" stroke-width="1" stroke-dasharray="1 1"/><line x1="508.95" y1="436.40000000000003" x2="508.95" y2="558.9" stroke="#000" stroke-opacity="0.65" stroke-width="1.5" stroke-dasharray="2 2"/><line x1="668.45" y1="436.40000000000003" x2="668.45" y2="558.9" stroke="#000" stroke-opacity="0.65" stroke-width="1.5" stroke-dasharray="2 2"/><line x1="827.95" y1="436.40000000000003" x2="827.95" y2="558.9" stroke="#000" stroke-opacity="0.65" stroke-width="1.5" stroke-dasharray="2 2"/><line x1="987.45" y1="436.40000000000003" x2="987.45" y2="558.9" stroke="#000" stroke-opacity="0.65" stroke-width="1.5" stroke-dasharray="2 2"/><line x1="1146.95" y1="436.40000000000003" x2="1146.95" y2="558.9" stroke="#000" stroke-opacity="0.65" stroke-width="1.5" stroke-dasharray="2 2"/><line x1="440.40000000000003" y1="455.1" x2="1266.6" y2="455.1" stroke="#000" stroke-opacity="0.7" stroke-width="1.3" stroke-dasharray="2.67 1.33"/><line x1="440.40000000000003" y1="491.6" x2="1266.6" y2="491.6" stroke="#000" stroke-opacity="0.7" stroke-width="1.3" stroke-dasharray="2.67 1.33"/><line x1="440.40000000000003" y1="528.2" x2="1266.6" y2="528.2" stroke="#000" stroke-opacity="0.7" stroke-width="1.3" stroke-dasharray="2.67 1.33"/><path d="M706.6 492.2 L709.8 497.9 L718.5 495.8 L727.2 492.9 L736 487.9 L739.8 478.5 L742.2 469.8 L749.8 467.9 L762.2 466.6 L767.2 472.2 L774 474 L781 474.8 L783.5 479.8 L793.5 482.2 L802.2 486 L808.5 488.8 L811 487.2 L816 480.4 L826 484.1 L834.8 484.8 L838.2 487.2 L839.8 491.2" fill="none" stroke="#b2b2b2" stroke-width="2.5" stroke-linejoin="round"/><path d="M508.9 528.2 L510.2 528.0 L511.5 527.5 L512.7 526.6 L514.0 525.5 L515.2 524.1 L516.5 522.5 L517.7 520.7 L519.0 518.7 L520.2 516.6 L521.5 514.4 L522.7 512.2 L524.0 509.9 L525.2 507.6 L526.5 505.4 L527.7 503.2 L529.0 501.1 L530.2 499.1 L531.5 497.3 L532.7 495.7 L534.0 494.3 L535.2 493.2 L536.5 492.3 L537.7 491.8 L539.0 491.6 L709.5 491.6 L711.5 491.5 L713.4 491.2 L715.4 490.8 L717.3 490.3 L719.3 489.6 L721.2 488.8 L723.2 487.9 L725.2 486.9 L727.1 485.9 L729.1 484.8 L731.0 483.7 L733.0 482.6 L735.0 481.4 L736.9 480.3 L738.9 479.2 L740.8 478.2 L742.8 477.2 L744.8 476.3 L746.7 475.5 L748.7 474.8 L750.6 474.3 L752.6 473.9 L754.5 473.6 L756.5 473.5 L785.0 473.5 L786.9 473.6 L788.8 473.9 L790.8 474.3 L792.7 474.8 L794.6 475.5 L796.5 476.3 L798.4 477.2 L800.3 478.2 L802.2 479.2 L804.2 480.3 L806.1 481.4 L808.0 482.6 L809.9 483.7 L811.8 484.8 L813.8 485.9 L815.7 486.9 L817.6 487.9 L819.5 488.8 L821.4 489.6 L823.3 490.3 L825.2 490.8 L827.2 491.2 L829.1 491.5 L831.0 491.6 L844.5 491.6" fill="none" stroke="#0000d4" stroke-width="3.3" stroke-linejoin="round" stroke-linecap="round"/><path d="M883.5 491.6 L1167.5 491.6 L1167.5 491.6 L1168.8 491.8 L1170.0 492.3 L1171.2 493.2 L1172.5 494.3 L1173.8 495.7 L1175.0 497.3 L1176.2 499.1 L1177.5 501.1 L1178.8 503.2 L1180.0 505.4 L1181.2 507.6 L1182.5 509.9 L1183.8 512.2 L1185.0 514.4 L1186.2 516.6 L1187.5 518.7 L1188.8 520.7 L1190.0 522.5 L1191.2 524.1 L1192.5 525.5 L1193.8 526.6 L1195.0 527.5 L1196.2 528.0 L1197.5 528.2" fill="none" stroke="#0000d4" stroke-width="3.3" stroke-linejoin="round" stroke-linecap="round"/><path d="M844.5 491.6 H883.5" fill="none" stroke="#e00000" stroke-width="3.3"/><rect x="489.25" y="440.60" width="39.40" height="12.60" rx="0.8" fill="#ffffe1" stroke="#444" stroke-width="1.15"/><text x="508.95" y="450.05" font-size="8.667" font-family="Liberation Sans, sans-serif" text-anchor="middle" fill="#111">00:00:00</text><rect x="489.25" y="542.70" width="39.40" height="12.30" rx="0.8" fill="#ffffe1" stroke="#444" stroke-width="1.15"/><text x="508.95" y="552.00" font-size="8.667" font-family="Liberation Sans, sans-serif" text-anchor="middle" fill="#111">00:00:00</text><rect x="648.75" y="440.60" width="39.40" height="12.60" rx="0.8" fill="#ffffe1" stroke="#444" stroke-width="1.15"/><text x="668.45" y="450.05" font-size="8.667" font-family="Liberation Sans, sans-serif" text-anchor="middle" fill="#111">00:00:20</text><rect x="648.75" y="542.70" width="39.40" height="12.30" rx="0.8" fill="#ffffe1" stroke="#444" stroke-width="1.15"/><text x="668.45" y="552.00" font-size="8.667" font-family="Liberation Sans, sans-serif" text-anchor="middle" fill="#111">00:00:20</text><rect x="808.25" y="440.60" width="39.40" height="12.60" rx="0.8" fill="#ffffe1" stroke="#444" stroke-width="1.15"/><text x="827.95" y="450.05" font-size="8.667" font-family="Liberation Sans, sans-serif" text-anchor="middle" fill="#111">00:00:40</text><rect x="808.25" y="542.70" width="39.40" height="12.30" rx="0.8" fill="#ffffe1" stroke="#444" stroke-width="1.15"/><text x="827.95" y="552.00" font-size="8.667" font-family="Liberation Sans, sans-serif" text-anchor="middle" fill="#111">00:00:40</text><rect x="967.75" y="440.60" width="39.40" height="12.60" rx="0.8" fill="#ffffe1" stroke="#444" stroke-width="1.15"/><text x="987.45" y="450.05" font-size="8.667" font-family="Liberation Sans, sans-serif" text-anchor="middle" fill="#111">00:01:00</text><rect x="967.75" y="542.70" width="39.40" height="12.30" rx="0.8" fill="#ffffe1" stroke="#444" stroke-width="1.15"/><text x="987.45" y="552.00" font-size="8.667" font-family="Liberation Sans, sans-serif" text-anchor="middle" fill="#111">00:01:00</text><rect x="1127.25" y="440.60" width="39.40" height="12.60" rx="0.8" fill="#ffffe1" stroke="#444" stroke-width="1.15"/><text x="1146.95" y="450.05" font-size="8.667" font-family="Liberation Sans, sans-serif" text-anchor="middle" fill="#111">00:01:20</text><rect x="1127.25" y="542.70" width="39.40" height="12.30" rx="0.8" fill="#ffffe1" stroke="#444" stroke-width="1.15"/><text x="1146.95" y="552.00" font-size="8.667" font-family="Liberation Sans, sans-serif" text-anchor="middle" fill="#111">00:01:20</text><rect x="443.60" y="448.80" width="25.60" height="12.60" rx="0.8" fill="#ffffe1" stroke="#444" stroke-width="1.15"/><text x="456.40" y="458.25" font-size="8.667" font-family="Liberation Sans, sans-serif" text-anchor="middle" fill="#111">+620</text><rect x="1237.80" y="448.80" width="25.60" height="12.60" rx="0.8" fill="#ffffe1" stroke="#444" stroke-width="1.15"/><text x="1250.60" y="458.25" font-size="8.667" font-family="Liberation Sans, sans-serif" text-anchor="middle" fill="#111">+620</text><rect x="443.60" y="485.30" width="25.60" height="12.60" rx="0.8" fill="#ffffe1" stroke="#444" stroke-width="1.15"/><text x="456.40" y="494.75" font-size="8.667" font-family="Liberation Sans, sans-serif" text-anchor="middle" fill="#111">+600</text><rect x="1237.80" y="485.30" width="25.60" height="12.60" rx="0.8" fill="#ffffe1" stroke="#444" stroke-width="1.15"/><text x="1250.60" y="494.75" font-size="8.667" font-family="Liberation Sans, sans-serif" text-anchor="middle" fill="#111">+600</text><rect x="443.60" y="521.90" width="25.60" height="12.60" rx="0.8" fill="#ffffe1" stroke="#444" stroke-width="1.15"/><text x="456.40" y="531.35" font-size="8.667" font-family="Liberation Sans, sans-serif" text-anchor="middle" fill="#111">+580</text><rect x="1237.80" y="521.90" width="25.60" height="12.60" rx="0.8" fill="#ffffe1" stroke="#444" stroke-width="1.15"/><text x="1250.60" y="531.35" font-size="8.667" font-family="Liberation Sans, sans-serif" text-anchor="middle" fill="#111">+580</text><rect x="443" y="557.8" width="26.8" height="1.1" fill="#3a3a3a"/><rect x="1237.2" y="557.8" width="26.8" height="1.1" fill="#3a3a3a"/></svg>
<div class="a" style="left:1.5px;top:565.8px;font-size:8px;line-height:12px;">Logs</div>
<svg class="a" style="left:1254px;top:566px" width="24" height="9" viewBox="0 0 24 9"><path d="M2.7 3.4h3.6v3.4h-3.6z M4.1 3.4v-1.6h3.6v3.4h-1.4" fill="none" stroke="#333" stroke-width="0.9"/><path d="M16.4 2.5l4.2 4.2M20.6 2.5l-4.2 4.2" stroke="#111" stroke-width="1.25"/></svg>
<div class="a" style="left:1.4px;top:579.4px;width:1278.6px;height:130.6px;background:#fff;box-sizing:border-box;border:1.2px solid #7c7c7c;border-top:1.4px solid #8a8a8a;border-right:1px solid #555;"></div>
<div class="a mono" style="left:6px;top:584.50px;line-height:10.66px;">[2021-12-17 12:21:33.492]:INF: Welcome to SatNavTrajectory V2.4.1 (16-Dec-21)</div>
<div class="a mono" style="left:6px;top:595.16px;line-height:10.66px;">[2021-12-17 12:21:33.492]:INF: Copyright (c) by Nav-Studio 2021</div>
<div class="a mono" style="left:6px;top:605.82px;line-height:10.66px;">[2021-12-17 12:21:38.430]:INF: SatNavTrj successfully loaded from 'E:/WW/ww00_bin/SatNavTrajectory/TestFiles/Helicopter/SatNavTrj_HelicopterExample4.snt'!</div>
<div class="a mono" style="left:6px;top:616.48px;line-height:10.66px;">[2021-12-17 12:21:38.432]:INF: Starting trajectory generation...</div>
<div class="a mono" style="left:6px;top:627.14px;line-height:10.66px;">[2021-12-17 12:21:38.478]:INF: ...trajectory generation done</div>
<div class="a mono" style="left:6px;top:637.80px;line-height:10.66px;">[2021-12-17 12:21:58.101]:INF: Starting trajectory generation...</div>
<div class="a mono" style="left:6px;top:648.46px;line-height:10.66px;">[2021-12-17 12:21:58.142]:INF: ...trajectory generation done</div>
<svg class="a" style="left:0;top:707px" width="40" height="13" viewBox="0 707 40 13"><path d="M-0.3 708.6 L3.3 719.4 L25.4 719.4 L29.6 708.6" fill="#fff" stroke="#444" stroke-width="0.9"/><rect x="0.6" y="707.6" width="28.4" height="2.6" fill="#fff"/></svg>
<div class="a" style="left:8.2px;top:708.2px;font-size:8.3px;line-height:11px;color:#111">Log</div>
<div class="a" style="left:32.5px;top:717.6px;width:1248px;height:1px;background:#f6f6f6;"></div>
<div class="a" style="left:485px;top:170px;width:241.6px;height:231.6px;background:#f0f0f0;box-sizing:border-box;border:1px solid #8c8c8c;box-shadow:0 2px 9px rgba(0,0,0,0.35),0 0 3px rgba(0,0,0,0.25);"></div>
<div class="a" style="left:486px;top:171px;width:239.6px;height:19.2px;background:#fff;"></div>
<svg class="a" style="left:489px;top:173px" width="15" height="15" viewBox="0 0 15 15"><g transform="translate(2.1 2.5)"><rect x="0.65" y="0.65" width="9.3" height="9.4" rx="1.1" fill="#c8c8ff" stroke="#34344c" stroke-width="1.25"/><line x1="2.4" y1="8.3" x2="8.6" y2="2" stroke="#2a2a34" stroke-width="1.5"/><line x1="2.6" y1="8.1" x2="8.4" y2="2.2" stroke="#fff" stroke-width="0.7"/><ellipse cx="5.4" cy="5.2" rx="2.1" ry="1.7" transform="rotate(-45 5.4 5.2)" fill="#f4ec00" stroke="#2a2a20" stroke-width="0.5"/></g></svg>
<div class="a" style="left:505.4px;top:175.3px;font-size:9px;line-height:12px;color:#000;transform:scaleX(0.894);transform-origin:0 0;">Configure antenna positions</div>
<svg class="a" style="left:711px;top:176px" width="10" height="10" viewBox="0 0 10 10"><path d="M1.4 1.2l7.2 7.2M8.6 1.2l-7.2 7.2" stroke="#222" stroke-width="0.8"/></svg>
<div class="sunk" style="left:499px;top:198px;width:212.6px;height:166px;background:#fff;"></div>
<div class="hdr" style="left:501px;top:200px;width:32.5px;height:14.5px;"></div>
<div class="t" style="left:503.5px;top:202.2px">Idx</div>
<div class="hdr" style="left:533.5px;top:200px;width:53.3px;height:14.5px;"></div>
<div class="t" style="left:536.0px;top:202.2px">Right</div>
<div class="hdr" style="left:586.8px;top:200px;width:53.3px;height:14.5px;"></div>
<div class="t" style="left:589.3px;top:202.2px">Front</div>
<div class="hdr" style="left:640.0999999999999px;top:200px;width:70.5px;height:14.5px;"></div>
<div class="t" style="left:642.5999999999999px;top:202.2px">Up</div>
<div class="a" style="left:507.5px;top:214.6px;width:1px;height:15.0px;background:#e4e4e4"></div>
<div class="a" style="left:507.5px;top:219.1px;width:6px;height:1px;background:#dadada"></div>
<div class="t" style="left:516px;top:214.6px;">1</div>
<div class="t" style="left:536.0px;top:214.6px;">0.000</div>
<div class="t" style="left:589.3px;top:214.6px;">0.000</div>
<div class="t" style="left:642.5999999999999px;top:214.6px;">0.000</div>
<div class="a" style="left:507.5px;top:229.1px;width:6px;height:1px;background:#dadada"></div>
<div class="a" style="left:514px;top:224.6px;width:196.6px;height:10px;background:#0078d7"></div>
<div class="t" style="left:516px;top:224.6px;color:#fff;">2</div>
<div class="a" style="left:533.5px;top:224.6px;width:53.3px;height:10px;box-sizing:border-box;border:1px dotted rgba(70,50,30,0.55)"></div>
<div class="t" style="left:536.0px;top:224.6px;color:#fff;">10.000</div>
<div class="t" style="left:589.3px;top:224.6px;color:#fff;">0.000</div>
<div class="t" style="left:642.5999999999999px;top:224.6px;color:#fff;">0.000</div>
<div class="btn" style="left:499.8px;top:378.5px;width:79.2px;height:15.6px;"><div style="margin-top:1.7px">Cancel</div></div>
<div class="btn" style="left:632.3px;top:378.4px;width:79.6px;height:15.3px;border:1px solid #8c8c8c;border-right-color:#6c6c6c;border-bottom-color:#6c6c6c;box-shadow:inset 1px 1px 0 #fff, inset -1px -1px 0 #b0b0b0;"><div style="margin-top:1.7px">Ok</div></div>
</body></html>
